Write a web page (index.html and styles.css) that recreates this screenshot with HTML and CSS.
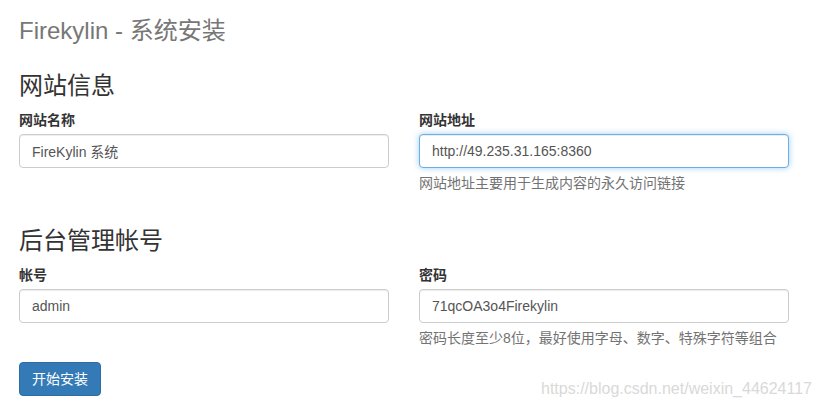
FILE: index.html
```html
<!DOCTYPE html>
<html lang="zh-CN">
<head>
<meta charset="utf-8">
<title>Firekylin - 系统安装</title>
<link rel="stylesheet" href="styles.css">
</head>
<body>
<div class="page">
  <h1 class="page-title">Firekylin - 系统安装</h1>

  <h2 class="section-title first">网站信息</h2>
  <div class="row">
    <div class="form-group">
      <label class="label">网站名称</label>
      <input class="input" type="text" value="FireKylin 系统">
    </div>
    <div class="form-group">
      <label class="label">网站地址</label>
      <input class="input focused" type="text" value="http://49.235.31.165:8360">
      <p class="help">网站地址主要用于生成内容的永久访问链接</p>
    </div>
  </div>

  <h2 class="section-title">后台管理帐号</h2>
  <div class="row">
    <div class="form-group">
      <label class="label">帐号</label>
      <input class="input" type="text" value="admin">
    </div>
    <div class="form-group">
      <label class="label">密码</label>
      <input class="input" type="text" value="71qcOA3o4Firekylin">
      <p class="help">密码长度至少8位，最好使用字母、数字、特殊字符等组合</p>
    </div>
  </div>

  <button class="btn" type="button">开始安装</button>
</div>
<div class="watermark">https://blog.csdn.net/weixin_44624117</div>
</body>
</html>
```

FILE: styles.css
```css
* {
  box-sizing: border-box;
}

html, body {
  margin: 0;
  padding: 0;
  background: #fff;
}

body {
  font-family: "Liberation Sans", "Noto Sans CJK SC", sans-serif;
  font-size: 14px;
  line-height: 20px;
  color: #333;
  width: 821px;
  height: 410px;
  overflow: hidden;
  position: relative;
}

.page {
  padding: 18px 19px 0 19px;
}

.page-title {
  margin: 0;
  font-size: 24px;
  line-height: 26.4px;
  font-weight: 400;
  color: #777;
}

.section-title {
  margin: 35px 0 10.6px 0;
  font-size: 24px;
  line-height: 26.4px;
  font-weight: 400;
  color: #333;
}

.section-title.first {
  margin-top: 28.6px;
}

.row {
  display: grid;
  grid-template-columns: 370px 370px;
  column-gap: 30px;
}

.form-group {
  display: flex;
  flex-direction: column;
}

.label {
  display: block;
  font-weight: 700;
  line-height: 20px;
  margin-bottom: 4px;
  color: #333;
}

.input {
  display: block;
  width: 370px;
  height: 34px;
  padding: 6px 12px;
  font-family: "Liberation Sans", "Noto Sans CJK SC", sans-serif;
  font-size: 14px;
  line-height: 20px;
  color: #555;
  background: #fff;
  border: 1px solid #ccc;
  border-radius: 4px;
  box-shadow: inset 0 1px 1px rgba(0, 0, 0, 0.075);
  outline: none;
}

.input.focused {
  border-color: #66afe9;
  box-shadow: inset 0 1px 1px rgba(0, 0, 0, 0.075), 0 0 6px rgba(102, 175, 233, 0.6);
}

.help {
  margin: 5px 0 0 0;
  line-height: 20px;
  color: #737373;
}

.btn {
  display: block;
  margin-top: 14px;
  padding: 6px 12px;
  font-family: "Liberation Sans", "Noto Sans CJK SC", sans-serif;
  font-size: 14px;
  line-height: 20px;
  color: #fff;
  background: #337ab7;
  border: 1px solid #2e6da4;
  border-radius: 4px;
}

.watermark {
  position: absolute;
  left: 541px;
  top: 379px;
  font-size: 16px;
  line-height: 20px;
  color: #d9d9d9;
  white-space: nowrap;
}
```
